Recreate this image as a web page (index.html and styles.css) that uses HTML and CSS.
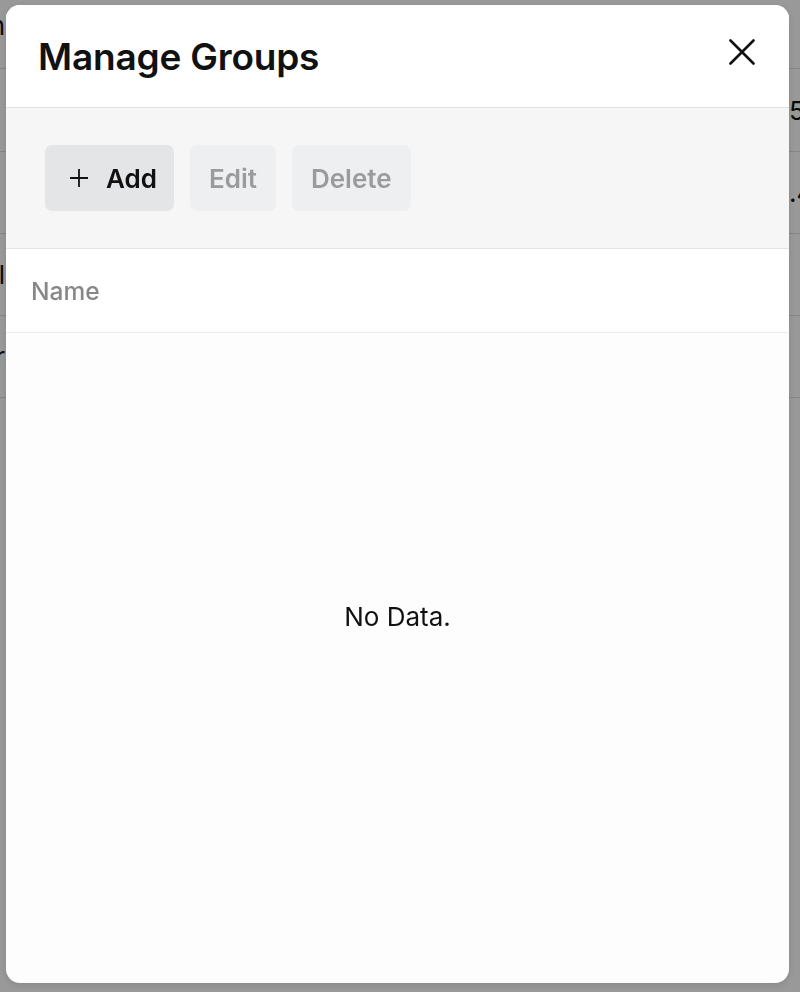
FILE: index.html
```html
<!DOCTYPE html>
<html lang="en">
<head>
<meta charset="utf-8">
<title>Manage Groups</title>
<link rel="stylesheet" href="styles.css">
</head>
<body>
<div class="page">
  <div class="bg-row r0"><div class="edge-left"><span>Column</span></div><div class="edge-right"></div></div>
  <div class="bg-row r1"><div class="edge-left"></div><div class="edge-right"><span>5 items</span></div></div>
  <div class="bg-row r2"><div class="edge-left"></div><div class="edge-right"><span>.4 ms</span></div></div>
  <div class="bg-row r3"><div class="edge-left"><span>Total</span></div><div class="edge-right"></div></div>
  <div class="bg-row r4"><div class="edge-left"><span>User</span></div><div class="edge-right"></div></div>
</div>
<div class="overlay"></div>
<div class="modal" role="dialog" aria-label="Manage Groups">
  <div class="modal-header">
    <h1 class="modal-title">Manage Groups</h1>
    <button class="close-btn" aria-label="Close">
      <svg width="26" height="26" viewBox="0 0 26 26" fill="none" stroke="#111" stroke-width="2.6" stroke-linecap="round"><path d="M1.5 1.5 L24.5 24.5 M24.5 1.5 L1.5 24.5"/></svg>
    </button>
  </div>
  <div class="toolbar">
    <button class="btn btn-primary">
      <svg class="plus" width="18" height="18" viewBox="0 0 18 18" fill="none" stroke="#111" stroke-width="1.8"><path d="M9 0 V18 M0 9 H18"/></svg>
      Add
    </button>
    <button class="btn btn-disabled">Edit</button>
    <button class="btn btn-disabled">Delete</button>
  </div>
  <div class="col-header">Name</div>
  <div class="table-body">
    <div class="empty">No Data.</div>
  </div>
</div>
</body>
</html>
```
FILE: styles.css
```css
html, body {
  margin: 0;
  padding: 0;
  height: 100%;
}
body {
  background: #ffffff;
  font-family: "Inter", "Noto Sans", sans-serif;
  overflow: hidden;
}
.page {
  display: flex;
  flex-direction: column;
}
.bg-row {
  display: flex;
  justify-content: space-between;
  align-items: center;
  border-bottom: 1px solid #e0e0e0;
  font-size: 26px;
  color: #111;
}
.r0 { height: 68px; align-items: flex-start; }
.r0 .edge-left span { margin-top: 10px; display: block; }
.r1 { height: 82px; }
.r2 { height: 81px; }
.r3 { height: 81px; }
.r4 { height: 81px; }
.edge-left, .edge-right {
  display: flex;
  overflow: hidden;
  white-space: nowrap;
}
.edge-left { justify-content: flex-end; width: 5px; }
.edge-right { justify-content: flex-start; width: 11px; }
.edge-left span, .edge-right span { flex: none; }
.overlay {
  position: fixed;
  inset: 0;
  background: rgba(0, 0, 0, 0.4);
}
.modal {
  position: fixed;
  left: 6px;
  top: 5px;
  width: 783px;
  height: 978px;
  background: #fdfdfd;
  border-radius: 14px;
  overflow: hidden;
  display: flex;
  flex-direction: column;
  box-shadow: 0 2px 8px rgba(0, 0, 0, 0.12);
}
.modal-header {
  height: 103px;
  background: #ffffff;
  border-bottom: 1px solid #e3e3e6;
  display: flex;
  align-items: center;
  justify-content: space-between;
  padding: 0 34px 0 32px;
  box-sizing: border-box;
}
.modal-title {
  margin: 0;
  font-size: 37px;
  font-weight: 600;
  color: #111;
  letter-spacing: -0.2px;
}
.close-btn {
  border: 0;
  background: none;
  padding: 0;
  width: 26px;
  height: 26px;
  display: flex;
  cursor: pointer;
  margin-bottom: 9px;
}
.toolbar {
  background: #f6f6f7;
  border-bottom: 1px solid #e3e3e6;
  padding: 37px 0 37px 39px;
  display: flex;
  gap: 16px;
}
.btn {
  height: 66px;
  border: 0;
  border-radius: 7px;
  font-family: inherit;
  font-size: 26px;
  font-weight: 600;
  display: flex;
  align-items: center;
  justify-content: center;
  padding: 0 19px;
}
.btn-primary {
  background: #e4e5e7;
  color: #111;
  padding: 0 17px 0 25px;
}
.plus {
  margin-right: 18px;
}
.btn-disabled {
  background: #eeeff1;
  color: #9b9b9e;
}
.col-header {
  height: 84px;
  background: #ffffff;
  border-bottom: 1px solid #ececee;
  display: flex;
  align-items: center;
  padding-left: 25px;
  font-size: 24.5px;
  font-weight: 500;
  color: #87878a;
  box-sizing: border-box;
}
.table-body {
  flex: 1;
  display: flex;
  justify-content: center;
  padding-top: 269px;
}
.empty {
  font-size: 26px;
  color: #111;
  line-height: 30px;
  height: 30px;
}
```
